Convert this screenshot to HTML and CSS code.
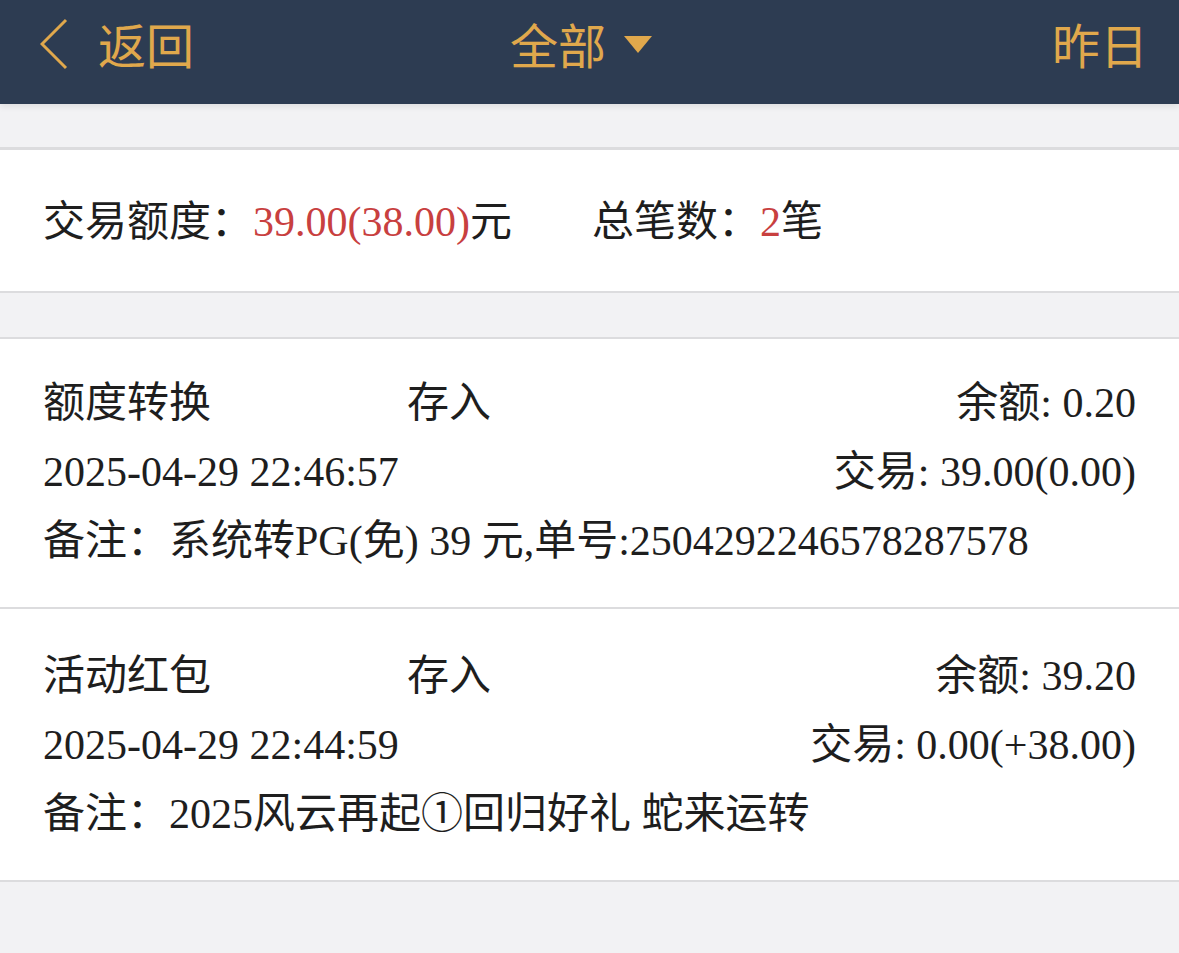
FILE: index.html
```html
<!DOCTYPE html>
<html lang="zh-CN">
<head>
<meta charset="utf-8">
<title>交易记录</title>
<link rel="stylesheet" href="styles.css">
</head>
<body>
<header class="topbar">
  <div class="back">
    <svg class="chev" width="28" height="52" viewBox="0 0 28 52"><polyline points="26,2 2,26 26,50" fill="none" stroke="#e0a84c" stroke-width="3"/></svg>
    <span class="back-text">返回</span>
  </div>
  <div class="title">
    <span>全部</span>
    <svg class="caret" width="28" height="17" viewBox="0 0 28 17"><polygon points="0,0 28,0 14,17" fill="#e0a84c"/></svg>
  </div>
  <div class="right">昨日</div>
</header>

<main class="page">
  <section class="summary">
    <div class="sum-item">交易额度：<span class="red">39.00(38.00)</span>元</div>
    <div class="sum-item">总笔数：<span class="red">2</span>笔</div>
  </section>

  <section class="list">
    <div class="record">
      <div class="row">
        <span class="c-name">额度转换</span>
        <span class="c-type">存入</span>
        <span class="c-right">余额: 0.20</span>
      </div>
      <div class="row">
        <span class="c-date">2025-04-29 22:46:57</span>
        <span class="c-right">交易: 39.00(0.00)</span>
      </div>
      <div class="row">
        <span>备注：系统转PG(免) 39 元,单号:2504292246578287578</span>
      </div>
    </div>
    <div class="record">
      <div class="row">
        <span class="c-name">活动红包</span>
        <span class="c-type">存入</span>
        <span class="c-right">余额: 39.20</span>
      </div>
      <div class="row">
        <span class="c-date">2025-04-29 22:44:59</span>
        <span class="c-right">交易: 0.00(+38.00)</span>
      </div>
      <div class="row">
        <span>备注：2025风云再起①回归好礼 蛇来运转</span>
      </div>
    </div>
  </section>
</main>
</body>
</html>
```

FILE: styles.css
```css
html, body {
  margin: 0;
  padding: 0;
}
body {
  background: #f2f2f4;
  font-family: "Liberation Serif", "Noto Sans CJK SC", serif;
  color: #1e1e1e;
  width: 1179px;
  height: 953px;
  overflow: hidden;
}
.topbar {
  height: 104px;
  background: #2d3c52;
  color: #e0a84c;
  font-family: "Noto Sans CJK SC", sans-serif;
  font-size: 48px;
  display: grid;
  grid-template-columns: 1fr auto 1fr;
  align-items: center;
  padding: 0 31px 18px 40px;
  box-sizing: border-box;
  box-shadow: 0 3px 6px rgba(0, 0, 0, 0.08);
  position: relative;
}
.back {
  display: flex;
  align-items: center;
  gap: 30px;
}
.chev {
  display: block;
  margin-top: 2px;
}
.back-text {
  line-height: 1;
}
.title {
  display: flex;
  align-items: center;
  gap: 18px;
  margin-right: 26px;
  line-height: 1;
}
.caret {
  display: block;
  margin-top: 2px;
}
.right {
  justify-self: end;
  line-height: 1;
}
.page {
  padding-top: 43px;
}
.summary {
  background: #fff;
  border-top: 3px solid #dcdcde;
  border-bottom: 2px solid #dcdcde;
  height: 135px;
  display: flex;
  align-items: center;
  gap: 80px;
  padding: 0 43px 6px;
  font-size: 42px;
}
.red {
  color: #c8403f;
}
.list {
  margin-top: 44px;
  border-top: 2px solid #dcdcde;
  background: #fff;
}
.record {
  border-bottom: 2px solid #dcdcde;
  padding: 30px 43px 31px;
  font-size: 42px;
  line-height: 69px;
}
.record + .record {
  padding-top: 33px;
}
.row {
  display: flex;
  white-space: nowrap;
}
.c-name {
  width: 364px;
}
.c-right {
  margin-left: auto;
}
```
